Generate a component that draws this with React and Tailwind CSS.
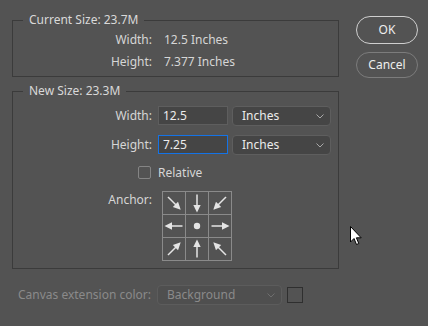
import React from 'react';

const font = { fontFamily: '"Noto Sans", "Open Sans", Arial, sans-serif' };

function Chevron({ color = '#a8a8a8' }) {
  return (
    <svg width="8" height="5" viewBox="0 0 8 5" className="shrink-0">
      <path d="M0.5 0.5 L4 4 L7.5 0.5" fill="none" stroke={color} strokeWidth="1" />
    </svg>
  );
}

function Select({ value, disabled, className = '' }) {
  return (
    <div
      className={`flex items-center justify-between rounded-[4px] border pl-[9px] pr-[6px] ${
        disabled ? 'border-[#5c5c5c] bg-[#4f4f4f] text-[#8a8a8a]' : 'border-[#5e5e5e] bg-[#454545] text-[#ececec]'
      } ${className}`}
    >
      <span>{value}</span>
      <Chevron color={disabled ? '#6e6e6e' : '#a8a8a8'} />
    </div>
  );
}

function Arrow({ rot, dot }) {
  if (dot) {
    return (
      <svg width="22" height="22" viewBox="0 0 22 22">
        <circle cx="11" cy="11" r="3.2" fill="#e4e4e4" />
      </svg>
    );
  }
  return (
    <svg width="22" height="22" viewBox="0 0 22 22" className={rot}>
      <line x1="2.5" y1="11" x2="15" y2="11" stroke="#e4e4e4" strokeWidth="1.5" />
      <path d="M20.5 11 L13 7.3 L13 14.7 Z" fill="#e4e4e4" />
    </svg>
  );
}

const anchorCells = [
  { rot: 'rotate-45' },
  { rot: 'rotate-90' },
  { rot: 'rotate-135' },
  { rot: 'rotate-180' },
  { dot: true },
  { rot: 'rotate-0' },
  { rot: '-rotate-45' },
  { rot: '-rotate-90' },
  { rot: '-rotate-135' },
];

export default function App() {
  return (
    <div className="relative flex w-[428px] h-[326px] bg-[#535353] text-[12px] text-[#d6d6d6] overflow-hidden" style={font}>
      <div className="pl-[12px] pt-[12px]">
        <fieldset className="w-[327px] border border-[#3b3b3b] pb-[3px]">
          <legend className="ml-[10px] px-[6px] leading-[16px] text-[#d9d9d9]">Current Size: 23.7M</legend>
          <div className="grid grid-cols-[139px_1fr] gap-x-[12px] pt-[1px] leading-[22px]">
            <span className="text-right">Width:</span>
            <span>12.5 Inches</span>
            <span className="text-right">Height:</span>
            <span>7.377 Inches</span>
          </div>
        </fieldset>

        <fieldset className="mt-[6px] w-[327px] border border-[#3b3b3b] pb-[7px]">
          <legend className="ml-[10px] px-[6px] leading-[16px] text-[#d9d9d9]">New Size: 23.3M</legend>
          <div className="grid grid-cols-[139px_auto] gap-x-[6px] pt-[7px]">
            <span className="self-center text-right">Width:</span>
            <div className="flex gap-[4px]">
              <div className="flex h-[19px] w-[70px] items-center border border-[#5e5e5e] bg-[#454545] pl-[4px] text-[#ececec]">12.5</div>
              <Select value="Inches" className="h-[20px] w-[99px]" />
            </div>

            <span className="mt-[9px] self-center text-right">Height:</span>
            <div className="mt-[9px] flex gap-[4px]">
              <div className="flex h-[19px] w-[70px] items-center border border-[#1473e6] bg-[#454545] pl-[4px] text-[#ececec]">7.25</div>
              <Select value="Inches" className="h-[20px] w-[99px]" />
            </div>

            <div className="mt-[11px] flex items-center justify-end pr-[1px]">
              <span className="h-[13px] w-[13px] rounded-[2px] border border-[#858585]" />
            </div>
            <span className="mt-[11px] leading-[13px]">Relative</span>

            <span className="mt-[12px] text-right">Anchor:</span>
            <div className="mt-[12px] ml-[4px] grid w-[70px] grid-cols-3 border-t border-l border-[#8a8a8a]">
              {anchorCells.map((c, i) => (
                <div key={i} className="flex h-[23px] w-[23px] items-center justify-center border-r border-b border-[#8a8a8a]">
                  <Arrow rot={c.rot} dot={c.dot} />
                </div>
              ))}
            </div>
          </div>
        </fieldset>

        <div className="mt-[16px] grid grid-cols-[139px_auto] gap-x-[6px] text-[#8a8a8a]">
          <span className="self-center text-right">Canvas extension color:</span>
          <div className="flex items-center gap-[5px]">
            <Select value="Background" disabled className="h-[20px] w-[125px]" />
            <span className="h-[16px] w-[16px] border border-[#2f2f2f]" />
          </div>
        </div>
      </div>

      <div className="ml-[17px] flex flex-col gap-[8px] pt-[16px] text-[#eeeeee]">
        <button className="flex h-[28px] w-[62px] items-center justify-center rounded-full border-[1.5px] border-[#cfcfcf]">OK</button>
        <button className="flex h-[26px] w-[62px] items-center justify-center rounded-full border border-[#7c7c7c]">Cancel</button>
      </div>

      <svg className="absolute left-[350px] top-[226px]" width="13" height="20" viewBox="0 0 13 20">
        <path d="M0.5 0.5 L0.5 16 L4 12.5 L6.5 18.5 L8.8 17.5 L6.4 11.8 L11.2 11.8 Z" fill="#ffffff" stroke="#000000" strokeWidth="1" />
      </svg>
    </div>
  );
}
